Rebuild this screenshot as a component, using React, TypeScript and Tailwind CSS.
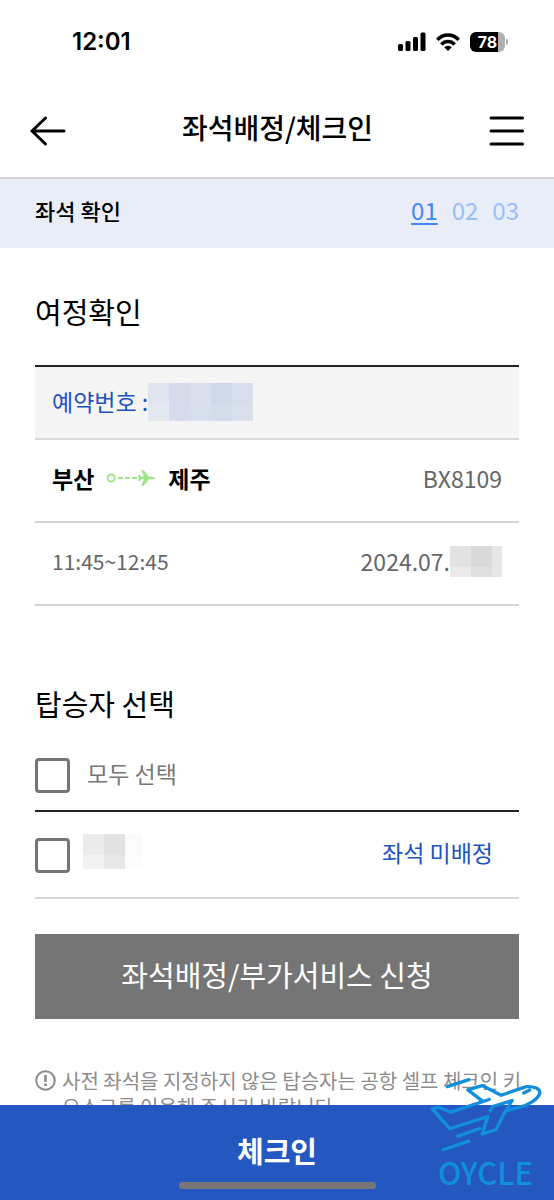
import { useState } from "react"

const STEPS = ["01", "02", "03"]
const PASSENGERS = ["passenger-1"]

function StatusBar() {
  return (
    <div className="flex h-[83px] shrink-0 items-center justify-between pr-[46px] pl-[72px] font-['Inter',sans-serif]">
      <span className="text-2xl font-semibold">12:01</span>
      <div className="flex items-center gap-[10px]">
        <svg width="28" height="19" viewBox="0 0 28 19" aria-hidden="true">
          <rect x="0" y="12" width="5" height="7" rx="1.5" />
          <rect x="7.5" y="9" width="5" height="10" rx="1.5" />
          <rect x="15" y="5" width="5" height="14" rx="1.5" />
          <rect x="22.5" y="0.5" width="5" height="18.5" rx="1.5" />
        </svg>
        <svg width="24" height="18" viewBox="0 0 24 18" fill="none" stroke="#000" strokeWidth="3.6" aria-hidden="true">
          <path d="M1.3 6.9C7.3 0.4 16.7 0.4 22.7 6.9" />
          <path d="M5.4 11.4C9.2 7.6 14.8 7.6 18.6 11.4" />
          <path d="M8.3 14.2C10.5 12.2 13.5 12.2 15.7 14.2L12 18Z" fill="#000" stroke="none" />
        </svg>
        <div className="flex items-center gap-px">
          <div className="flex h-5 w-[35px] items-center justify-center rounded-md bg-linear-to-r from-black from-80% to-[#b0b0b0] to-80% text-base leading-5 font-bold text-white">
            78
          </div>
          <div className="h-1.5 w-0.5 rounded-r bg-[#b0b0b0]" />
        </div>
      </div>
    </div>
  )
}

function Header() {
  return (
    <header className="flex h-[96px] shrink-0 items-center justify-between border-b-2 border-[#d6d6d6] px-[30px] pt-0.5">
      <button type="button" aria-label="뒤로">
        <svg width="36" height="30" viewBox="0 0 36 30" fill="none" stroke="#000" strokeWidth="3" strokeLinecap="round" strokeLinejoin="round">
          <path d="M34 15H2M15.5 2L2 15L15.5 28" />
        </svg>
      </button>
      <h1 className="pb-2 text-[28px] leading-10 font-medium">좌석배정/체크인</h1>
      <button type="button" aria-label="메뉴">
        <svg width="35" height="30" viewBox="0 0 35 30" fill="none" stroke="#000" strokeWidth="3" strokeLinecap="round">
          <path d="M2 2H33.5M2 15H33.5M2 28H33.5" />
        </svg>
      </button>
    </header>
  )
}

// Pixelated block that hides personal data
function Mosaic({ colors, className }: { colors: string[]; className: string }) {
  return (
    <div aria-hidden="true" className={`grid shrink-0 ${className}`}>
      {colors.map((color, i) => (
        <div key={i} className={color} />
      ))}
    </div>
  )
}

function RouteArrow() {
  return (
    <svg width="50" height="20" viewBox="0 0 50 20" fill="none" stroke="#a0e388" strokeWidth="2" aria-hidden="true">
      <circle cx="5.2" cy="9" r="3.6" />
      <path d="M12 9H31" strokeDasharray="5 2" />
      <path
        d="M33 8.1H38.3L35.6 1.5H37.6L42.8 8H46.5Q49 8.2 49 9Q49 9.8 46.5 10H42.8L37.6 16.5H35.6L38.3 9.9H35.4L33.8 11.8H32.2L33.2 9L32.2 6.2H33.8L35.4 8.1Z"
        fill="#a0e388"
        stroke="#a0e388"
        strokeWidth="0.6"
      />
    </svg>
  )
}

function Watermark() {
  return (
    <div className="pointer-events-none absolute right-3 bottom-2 flex w-[113px] flex-col items-center text-[#118edc]">
      <svg width="113" height="77" viewBox="45 45 340 230" fill="none" stroke="currentColor" strokeWidth="10" strokeLinecap="round" strokeLinejoin="round" aria-hidden="true">
        <path d="M100 79L165 58" />
        <path d="M226 118L110 156L75 141L55 146L108 206L222 169L205 222L246 209L274 155L295 121L236 139L229 152" />
        <path d="M205 122L162 89L205 76L262 105L338 79C362 78 380 84 378 99C373 118 342 136 318 141L280 151" />
        <path d="M330 98L348 89" />
        <path d="M132 228L198 205M88 269L165 243" />
      </svg>
      <span className="text-[31px] leading-10 font-medium">OYCLE</span>
    </div>
  )
}

export default function App() {
  const [selected, setSelected] = useState<string[]>([])
  const allSelected = selected.length === PASSENGERS.length

  function toggle(id: string) {
    setSelected((prev) =>
      prev.includes(id) ? prev.filter((p) => p !== id) : [...prev, id]
    )
  }

  const checkbox =
    "size-[35px] shrink-0 appearance-none rounded-[4px] border-3 border-[#757575] bg-white checked:bg-[#2457c0]"

  return (
    <div className="relative flex h-screen flex-col bg-white font-['Noto_Sans_CJK_KR',sans-serif] text-black">
      <StatusBar />
      <Header />

      <main className="min-h-0 flex-1 overflow-y-auto [scrollbar-width:none]">
        <div className="flex h-[69px] items-center justify-between bg-[#e9edf8] px-[35px] pb-2 leading-8">
          <h2 className="text-[22px] font-medium">좌석 확인</h2>
          <ol className="flex gap-[14px] text-2xl leading-8 text-[#99bdf8]">
            {STEPS.map((step, i) => (
              <li
                key={step}
                className={i === 0 ? "text-[#4287f5] underline decoration-2 underline-offset-3" : ""}
              >
                {step}
              </li>
            ))}
          </ol>
        </div>

        <section className="px-[35px] pt-[43px]">
          <h2 className="text-[29px] leading-10">여정확인</h2>
          <div className="mt-[34px] border-t-2 border-[#222]">
            <div className="flex h-[73px] items-center border-b-2 border-[#d8d8d8] bg-[#f5f5f5] px-[17px] pb-0.5 text-[23px] text-[#1d53c0]">
              <span>예약번호 :</span>
              <Mosaic
                className="grid-cols-[repeat(5,21px)] grid-rows-[21px_17px]"
                colors={[
                  "bg-[#e0e5f0]", "bg-[#d4dbeb]", "bg-[#d9e0ec]", "bg-[#d0d9ea]", "bg-[#d7deeb]",
                  "bg-[#e4e8f1]", "bg-[#d6dced]", "bg-[#d8dfec]", "bg-[#d5dcec]", "bg-[#d8e0ec]",
                ]}
              />
            </div>
            <div className="flex h-[83px] items-center justify-between border-b-2 border-[#d4d4d4] px-[17px] pb-1 text-[23px]">
              <div className="flex items-center gap-3 font-bold">
                <span>부산</span>
                <RouteArrow />
                <span>제주</span>
              </div>
              <span className="text-[#666]">BX8109</span>
            </div>
            <div className="flex h-[83px] items-center justify-between border-b-2 border-[#d4d4d4] px-[17px] pb-1 text-[#666]">
              <span className="text-[21px]">11:45~12:45</span>
              <div className="flex items-center text-[23px]">
                <span>2024.07.</span>
                <Mosaic
                  className="grid-cols-[21px_21px_10px] grid-rows-[21px_10px]"
                  colors={[
                    "bg-[#e2e2e2]", "bg-[#d9d9d9]", "bg-[#e6e6e6]",
                    "bg-[#eaeaea]", "bg-[#dfdfdf]", "bg-[#e7e7e7]",
                  ]}
                />
              </div>
            </div>
          </div>
        </section>

        <section className="px-[35px] pt-[77px]">
          <h2 className="text-[29px] leading-10">탑승자 선택</h2>
          <label className="mt-[17px] flex h-[72px] items-center gap-[17px] border-b-2 border-[#222] text-[23px] text-[#777]">
            <input
              type="checkbox"
              className={checkbox}
              checked={allSelected}
              onChange={() => setSelected(allSelected ? [] : PASSENGERS)}
            />
            <span className="pb-1">모두 선택</span>
          </label>
          {PASSENGERS.map((id) => (
            <div key={id} className="flex h-[87px] items-center justify-between border-b-2 border-[#d8d8d8] pr-[26px]">
              <label className="flex items-center gap-[13px] pt-0.5">
                <input
                  type="checkbox"
                  aria-label="탑승자"
                  className={checkbox}
                  checked={selected.includes(id)}
                  onChange={() => toggle(id)}
                />
                <Mosaic
                  className="mb-2 grid-cols-[21px_21px_17px] grid-rows-[21px_14px]"
                  colors={[
                    "bg-[#ebebeb]", "bg-[#e2e2e2]", "bg-[#fbfbfb]",
                    "bg-[#f2f2f2]", "bg-[#e7e7e7]", "bg-[#fcfcfc]",
                  ]}
                />
              </label>
              <span className="pb-1 text-[23px] text-[#1d53c0]">좌석 미배정</span>
            </div>
          ))}

          <button
            type="button"
            className="mt-[35px] h-[85px] w-full bg-[#757575] pb-1 text-[29px] text-white"
          >
            좌석배정/부가서비스 신청
          </button>

          <div className="mt-[49px] flex gap-[6px] text-xl leading-[26px] text-[#8c8c8c]">
            <svg className="mt-0.5 shrink-0" width="21" height="21" viewBox="0 0 21 21" fill="none" stroke="currentColor" strokeWidth="2" aria-hidden="true">
              <circle cx="10.5" cy="10.5" r="9.3" />
              <path d="M10.5 5V12M10.5 13.5V16" strokeWidth="2.6" />
            </svg>
            <p className="-mr-2 break-all">
              사전 좌석을 지정하지 않은 탑승자는 공항 셀프 체크인 키오스크를 이용해 주시기 바랍니다.
            </p>
          </div>
        </section>
      </main>

      <footer className="h-[95px] shrink-0 bg-[#2457c0]">
        <button type="button" className="flex h-full w-full flex-col items-center justify-between pt-[25px] pb-[11px] text-white">
          <span className="text-[29px] leading-10 font-bold">체크인</span>
          <span className="h-[7px] w-[197px] rounded-full bg-[#777]" />
        </button>
      </footer>

      <Watermark />
    </div>
  )
}
